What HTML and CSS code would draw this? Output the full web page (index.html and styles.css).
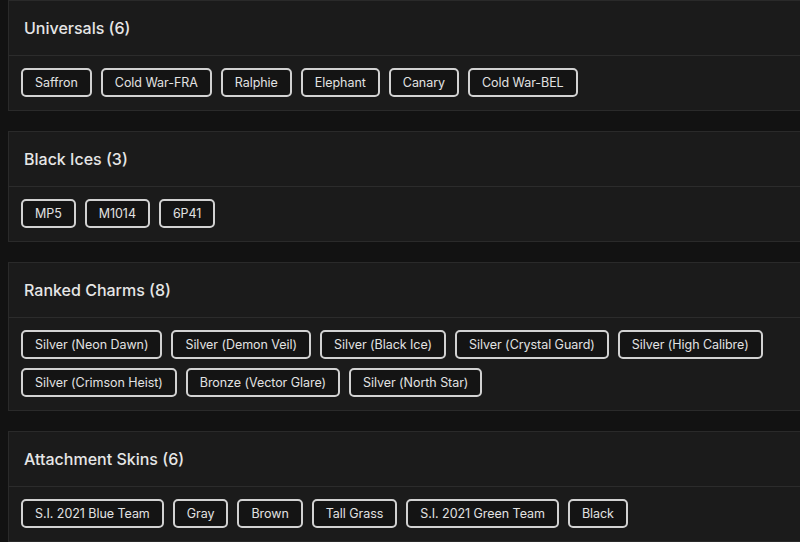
FILE: index.html
```html
<!DOCTYPE html>
<html>
<head>
<meta charset="utf-8">
<link rel="stylesheet" href="styles.css">
</head>
<body>
<div class="page">
  <section class="card">
    <div class="card-header"><h2 class="card-title">Universals (6)</h2></div>
    <div class="card-body">
      <span class="tag">Saffron</span>
      <span class="tag">Cold War-FRA</span>
      <span class="tag">Ralphie</span>
      <span class="tag">Elephant</span>
      <span class="tag">Canary</span>
      <span class="tag">Cold War-BEL</span>
    </div>
  </section>
  <section class="card">
    <div class="card-header"><h2 class="card-title">Black Ices (3)</h2></div>
    <div class="card-body">
      <span class="tag">MP5</span>
      <span class="tag">M1014</span>
      <span class="tag">6P41</span>
    </div>
  </section>
  <section class="card">
    <div class="card-header"><h2 class="card-title">Ranked Charms (8)</h2></div>
    <div class="card-body">
      <span class="tag">Silver (Neon Dawn)</span>
      <span class="tag">Silver (Demon Veil)</span>
      <span class="tag">Silver (Black Ice)</span>
      <span class="tag">Silver (Crystal Guard)</span>
      <span class="tag">Silver (High Calibre)</span>
      <span class="tag">Silver (Crimson Heist)</span>
      <span class="tag">Bronze (Vector Glare)</span>
      <span class="tag">Silver (North Star)</span>
    </div>
  </section>
  <section class="card">
    <div class="card-header"><h2 class="card-title">Attachment Skins (6)</h2></div>
    <div class="card-body">
      <span class="tag">S.I. 2021 Blue Team</span>
      <span class="tag">Gray</span>
      <span class="tag">Brown</span>
      <span class="tag">Tall Grass</span>
      <span class="tag">S.I. 2021 Green Team</span>
      <span class="tag">Black</span>
    </div>
  </section>
</div>
</body>
</html>
```
FILE: styles.css
```css
html, body {
  margin: 0;
  padding: 0;
  overflow: hidden;
  background: #121212;
}
body {
  font-family: Inter, "Open Sans", "Liberation Sans", sans-serif;
  color: #e4e4e4;
}
.page {
  width: 830px;
  padding: 0 0 0 8px;
  display: flex;
  flex-direction: column;
  gap: 20px;
}
.card {
  background: #1b1b1b;
  border: 1px solid #2a2a2a;
}
.card-header {
  height: 54px;
  display: flex;
  align-items: center;
  padding: 0 15px;
  border-bottom: 1px solid #2c2c2c;
}
.card-title {
  margin: 0;
  font-size: 16px;
  font-weight: 500;
  color: #e6e6e6;
}
.card-body {
  display: flex;
  flex-wrap: wrap;
  column-gap: 9px;
  row-gap: 9px;
  padding: 12px 12px 13px;
}
.tag {
  display: inline-flex;
  align-items: center;
  height: 29px;
  box-sizing: border-box;
  padding: 0 12px;
  border: 2px solid #d2d2d2;
  border-radius: 5px;
  background: #141414;
  font-size: 12.5px;
  letter-spacing: -0.05px;
  color: #e2e2e2;
}
```
